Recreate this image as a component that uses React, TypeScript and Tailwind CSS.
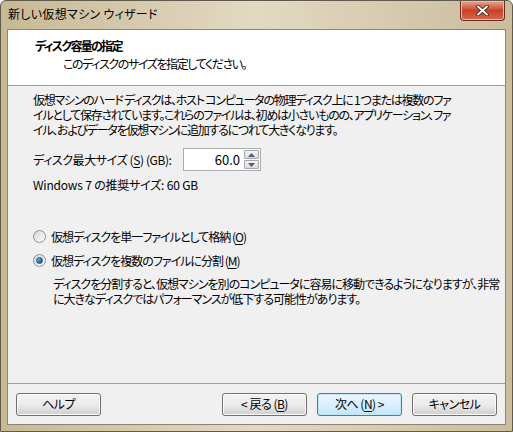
import React from 'react';

const font = "[font-family:'Noto_Sans_CJK_JP','Noto_Sans',sans-serif] [font-feature-settings:'palt']";

function U({ children }: { children: React.ReactNode }) {
  return <span className="underline underline-offset-2">{children}</span>;
}

function Radio({ checked }: { checked?: boolean }) {
  return (
    <span className="relative inline-flex h-[13px] w-[13px] shrink-0 items-center justify-center rounded-full border border-[#8e8f8f] bg-gradient-to-br from-[#d8d8d8] to-[#fbfbfb]">
      {checked && (
        <span className="h-[7px] w-[7px] rounded-full border border-[#1b4f7c] bg-gradient-to-br from-[#8fd4f7] via-[#2a86c6] to-[#0f4c86]" />
      )}
    </span>
  );
}

function Button({ children, primary }: { children: React.ReactNode; primary?: boolean }) {
  return (
    <button
      className={
        'flex h-[23px] w-[85px] items-center justify-center rounded-[3px] border text-[12px] tracking-[-0.5px] text-black ' +
        (primary
          ? 'border-[#3c7fb1] bg-gradient-to-b from-[#eaf6fd] via-[#d9f0fc] to-[#bee6fd] shadow-[inset_0_0_0_1px_#c4e5f6]'
          : 'border-[#707070] bg-gradient-to-b from-[#f2f2f2] via-[#ebebeb] to-[#cfcfcf] shadow-[inset_0_0_0_1px_#fbfbfb]')
      }
    >
      {children}
    </button>
  );
}

export default function App() {
  return (
    <div className={`${font} flex h-[432px] w-[513px] flex-col overflow-hidden rounded-t-[6px] border border-[#5f5a4e] bg-gradient-to-r from-[#c8b995] via-[#e3d9c3] to-[#cbbd9c] text-black`}>
      {/* title bar */}
      <div className="flex h-[28px] shrink-0 items-start justify-between">
        <span className="mt-[5px] ml-[7px] text-[12px] leading-[16px] tracking-[0.3px] text-black">新しい仮想マシン ウィザード</span>
        <div className="mr-[7px] flex h-[20px] w-[45px] items-center justify-center rounded-b-[4px] border border-t-0 border-[#6b2a1e] bg-gradient-to-b from-[#e8a48e] via-[#c7412a] to-[#d8664b] shadow-[inset_0_0_0_1px_#f0b9a8]">
          <svg width="13" height="11" viewBox="0 0 13 11">
            <path d="M2 1.5 L11 9.5 M11 1.5 L2 9.5" stroke="#3a1a12" strokeWidth="3.6" strokeLinecap="round" />
            <path d="M2 1.5 L11 9.5 M11 1.5 L2 9.5" stroke="#ffffff" strokeWidth="2" strokeLinecap="round" />
          </svg>
        </div>
      </div>

      {/* client */}
      <div className="mx-[6px] mb-[6px] flex flex-1 flex-col border border-[#8b8576] bg-[#f0f0f0]">
        <div className="h-[56px] shrink-0 border-b border-[#a0a0a0] bg-white">
          <div className="pt-[8px] pl-[27px] text-[12px] leading-[16px] font-bold tracking-[-1.7px]">ディスク容量の指定</div>
          <div className="pt-[2px] pl-[55px] text-[12px] leading-[16px] tracking-[-1.4px]">このディスクのサイズを指定してください。</div>
        </div>

        <div className="flex flex-1 flex-col px-[25px] pt-[6px] text-[12px] leading-[15px] tracking-[-1px]">
          <p className="whitespace-nowrap tracking-[-1.25px]">
            仮想マシンのハード ディスクは、ホスト コンピュータの物理ディスク上に 1 つまたは複数のファ
            <br />
            イルとして保存されています。これらのファイルは、初めは小さいものの、アプリケーション、ファ
            <br />
            イル、およびデータを仮想マシンに追加するにつれて大きくなります。
          </p>

          <div className="mt-[11px] flex items-center">
            <span className="w-[150px] tracking-[-0.4px]">
              ディスク最大サイズ (<U>S</U>) (GB):
            </span>
            <div className="flex h-[23px] w-[78px] items-center border border-[#abadb3] bg-white">
              <span className="flex-1 pr-[4px] text-right text-[13px] tracking-normal">60.0</span>
              <div className="mr-[1px] flex h-[19px] w-[15px] flex-col gap-[1px]">
                <div className="flex flex-1 items-center justify-center rounded-[1px] border border-[#a7a7a7] bg-gradient-to-b from-[#f4f4f4] to-[#dcdcdc]">
                  <svg width="7" height="4" viewBox="0 0 7 4"><path d="M0 4 L3.5 0 L7 4 Z" fill="#4a5f80" /></svg>
                </div>
                <div className="flex flex-1 items-center justify-center rounded-[1px] border border-[#a7a7a7] bg-gradient-to-b from-[#f4f4f4] to-[#dcdcdc]">
                  <svg width="7" height="4" viewBox="0 0 7 4"><path d="M0 0 L3.5 4 L7 0 Z" fill="#4a5f80" /></svg>
                </div>
              </div>
            </div>
          </div>

          <div className="mt-[6px] tracking-[-0.2px]">Windows 7 の推奨サイズ: 60 GB</div>

          <div className="mt-[37px] flex items-center gap-[5px]">
            <Radio />
            <span>
              仮想ディスクを単一ファイルとして格納 (<U>O</U>)
            </span>
          </div>
          <div className="mt-[9px] flex items-center gap-[5px]">
            <Radio checked />
            <span>
              仮想ディスクを複数のファイルに分割 (<U>M</U>)
            </span>
          </div>
          <p className="mt-[8px] pl-[20px] whitespace-nowrap">
            ディスクを分割すると、仮想マシンを別のコンピュータに容易に移動できるようになりますが、非常
            <br />
            に大きなディスクではパフォーマンスが低下する可能性があります。
          </p>
        </div>

        <div className="flex h-[41px] shrink-0 items-center border-t border-[#a0a0a0] px-[8px]">
          <Button>ヘルプ</Button>
          <div className="flex-1" />
          <div className="flex gap-[10px]">
            <Button>
              &lt; 戻る (<U>B</U>)
            </Button>
            <Button primary>
              次へ (<U>N</U>) &gt;
            </Button>
            <Button>キャンセル</Button>
          </div>
        </div>
      </div>
    </div>
  );
}
